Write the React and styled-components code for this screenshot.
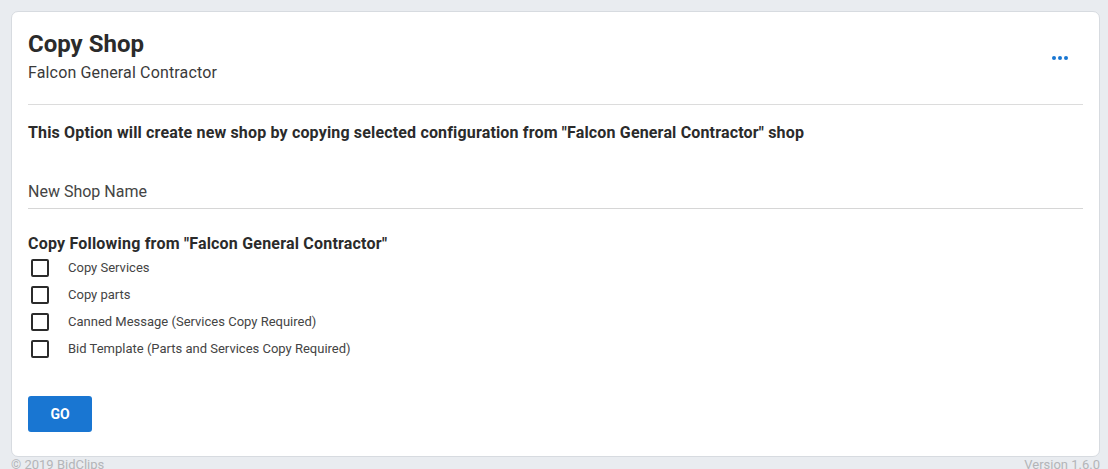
import styled, { createGlobalStyle } from "styled-components";

const Global = createGlobalStyle`
  html, body {
    margin: 0;
    padding: 0;
    background: #e9ecf0;
    font-family: Roboto, "Liberation Sans", sans-serif;
    color: #2b2b2b;
  }
`;

const Page = styled.div`
  padding: 11px 8px 0 11px;
  height: 469px;
  box-sizing: border-box;
  overflow: hidden;
`;

const Card = styled.div`
  background: #fff;
  border: 1px solid #d7dbe0;
  border-radius: 7px;
  padding: 16px 16px 24px 16px;
  height: 446px;
  box-sizing: border-box;
`;

const Header = styled.div`
  display: flex;
  justify-content: space-between;
  align-items: center;
  padding-bottom: 20px;
  border-bottom: 1px solid #dcdcdc;
`;

const Title = styled.h1`
  margin: 0;
  font-size: 24px;
  font-weight: 700;
  line-height: 32px;
  color: #2b2b2b;
`;

const Subtitle = styled.div`
  font-size: 16px;
  letter-spacing: 0.15px;
  line-height: 22px;
  color: #3a3a3a;
  margin-top: 2px;
`;

const MoreBtn = styled.button`
  border: none;
  background: none;
  padding: 4px 0;
  margin-right: 15px;
  margin-top: 4px;
  display: flex;
  gap: 2px;
  cursor: pointer;
`;

const Dot = styled.span`
  width: 4px;
  height: 4px;
  border-radius: 50%;
  background: #1976d2;
`;

const Intro = styled.p`
  margin: 19px 0 0;
  font-size: 16px;
  font-weight: 700;
  line-height: 18px;
  color: #2b2b2b;
  letter-spacing: 0.16px;
`;

const NameField = styled.div`
  margin-top: 40px;
  font-size: 16px;
  line-height: 20px;
  color: #444;
  padding-bottom: 6px;
  border-bottom: 1px solid #d6d6d6;
`;

const SectionTitle = styled.h2`
  margin: 25px 0 0;
  font-size: 16px;
  letter-spacing: 0.2px;
  font-weight: 700;
  line-height: 20px;
  color: #2b2b2b;
`;

const List = styled.div`
  display: flex;
  flex-direction: column;
`;

const Row = styled.label`
  display: flex;
  align-items: center;
  height: 27px;
  font-size: 13px;
  color: #444;
`;

const Box = styled.span`
  width: 14px;
  height: 14px;
  border: 2px solid #2b2b2b;
  border-radius: 2px;
  margin: 0 19px 0 3px;
`;

const GoButton = styled.button`
  margin-top: 34px;
  width: 64px;
  height: 36px;
  border: none;
  border-radius: 3px;
  background: #1976d2;
  color: #fff;
  font-family: Roboto, "Liberation Sans", sans-serif;
  font-size: 14px;
  font-weight: 700;
  cursor: pointer;
`;

const Footer = styled.div`
  display: flex;
  justify-content: space-between;
  font-size: 13px;
  color: #b3b5b8;
  line-height: 14px;
  padding-top: 1px;
`;

const options = [
  "Copy Services",
  "Copy parts",
  "Canned Message (Services Copy Required)",
  "Bid Template (Parts and Services Copy Required)",
];

export default function App() {
  return (
    <Page>
      <Global />
      <Card>
        <Header>
          <div>
            <Title>Copy Shop</Title>
            <Subtitle>Falcon General Contractor</Subtitle>
          </div>
          <MoreBtn>
            <Dot />
            <Dot />
            <Dot />
          </MoreBtn>
        </Header>
        <Intro>
          This Option will create new shop by copying selected configuration from "Falcon General Contractor" shop
        </Intro>
        <NameField>New Shop Name</NameField>
        <SectionTitle>Copy Following from "Falcon General Contractor"</SectionTitle>
        <List>
          {options.map((o) => (
            <Row key={o}>
              <Box />
              {o}
            </Row>
          ))}
        </List>
        <GoButton>GO</GoButton>
      </Card>
      <Footer>
        <span>© 2019 BidClips</span>
        <span>Version 1.6.0</span>
      </Footer>
    </Page>
  );
}
